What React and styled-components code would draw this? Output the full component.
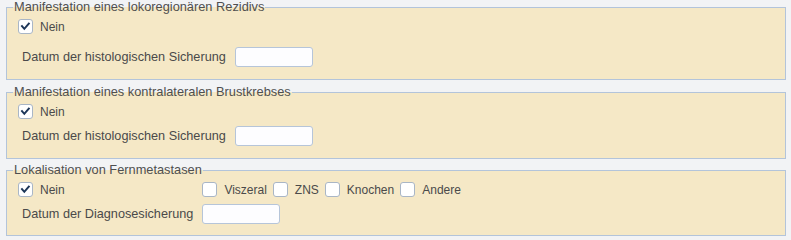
import React from "react";
import styled, { createGlobalStyle } from "styled-components";

const Global = createGlobalStyle`
  html, body { margin: 0; padding: 0; background: #f2f3f5; }
  body { font-family: "Liberation Sans", Arial, sans-serif; color: #4a4a4a; }
`;

const Page = styled.div`
  display: flex;
  flex-direction: column;
  padding: 0 5px 0 6px;
  width: 791px;
  box-sizing: border-box;
`;

const Fieldset = styled.fieldset`
  margin: ${(p) => p.$mt || 0}px 0 0 0;
  padding: 0;
  min-width: 0;
  border: 1px solid #b3c4da;
  background: #f5e8c6;
`;

const Legend = styled.legend`
  margin-left: 6px;
  padding: 0 1px;
  font-size: 12.8px;
  line-height: 14px;
  color: #4f4f4f;
`;

const Body = styled.div`
  display: grid;
  grid-template-columns: max-content 1fr;
  row-gap: ${(p) => p.$rowGap}px;
  padding: 5px 11px ${(p) => p.$pb || 12}px 11px;
  align-items: center;
`;

const Cell = styled.div`
  display: flex;
  align-items: center;
  gap: 6px;
  grid-column: ${(p) => p.$span || "auto"};
  height: ${(p) => p.$h || 15}px;
`;

const Label = styled.span`
  font-size: 12.7px;
  padding: 0 9px 0 4px;
  white-space: nowrap;
`;

const Option = styled.label`
  display: flex;
  align-items: center;
  gap: 7px;
  font-size: 12px;
  white-space: nowrap;
`;

const Box = styled.span`
  width: 15px;
  height: 15px;
  box-sizing: border-box;
  border: 1px solid #a9b6c6;
  border-radius: 3px;
  background: #fff;
  display: inline-flex;
  position: relative;
`;

const Input = styled.input`
  width: 78px;
  height: 20px;
  box-sizing: border-box;
  border: 1px solid #b6c5d9;
  border-radius: 3px;
  background: #fdfdff;
  margin: 0;
  padding: 0 3px;
`;

const Check = ({ checked }) => (
  <Box>
    {checked && (
      <svg width="15" height="15" viewBox="0 0 15 15" style={{ position: "absolute", left: -1, top: -1 }}>
        <path d="M4 7.2 L6.3 9.8 L10.8 4.6" fill="none" stroke="#1d3658" strokeWidth="2" strokeLinecap="square" />
      </svg>
    )}
  </Box>
);

const CheckOption = ({ label, checked }) => (
  <Option>
    <Check checked={checked} />
    {label}
  </Option>
);

export default function App() {
  return (
    <>
      <Global />
      <Page>
        <Fieldset>
          <Legend>Manifestation eines lokoregionären Rezidivs</Legend>
          <Body $rowGap={13}>
            <Cell $span="1 / -1">
              <CheckOption label="Nein" checked />
            </Cell>
            <Cell $h={20}>
              <Label>Datum der histologischen Sicherung</Label>
            </Cell>
            <Cell $h={20}>
              <Input type="text" />
            </Cell>
          </Body>
        </Fieldset>
        <Fieldset $mt={5}>
          <Legend>Manifestation eines kontralateralen Brustkrebses</Legend>
          <Body $rowGap={7}>
            <Cell $span="1 / -1">
              <CheckOption label="Nein" checked />
            </Cell>
            <Cell $h={20}>
              <Label>Datum der histologischen Sicherung</Label>
            </Cell>
            <Cell $h={20}>
              <Input type="text" />
            </Cell>
          </Body>
        </Fieldset>
        <Fieldset $mt={4}>
          <Legend>Lokalisation von Fernmetastasen</Legend>
          <Body $rowGap={7} $pb={11}>
            <Cell>
              <CheckOption label="Nein" checked />
            </Cell>
            <Cell>
              <CheckOption label="Viszeral" />
              <CheckOption label="ZNS" />
              <CheckOption label="Knochen" />
              <CheckOption label="Andere" />
            </Cell>
            <Cell $h={20}>
              <Label>Datum der Diagnosesicherung</Label>
            </Cell>
            <Cell $h={20}>
              <Input type="text" />
            </Cell>
          </Body>
        </Fieldset>
      </Page>
    </>
  );
}
